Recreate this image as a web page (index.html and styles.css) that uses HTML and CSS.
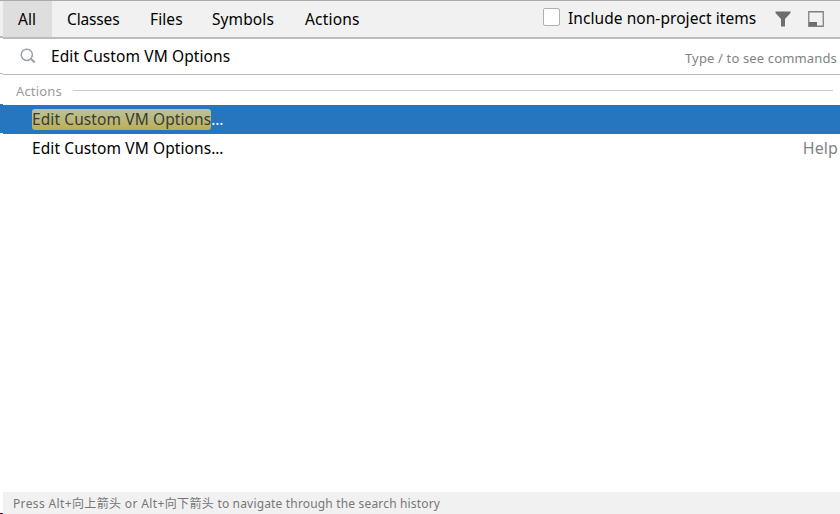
FILE: index.html
```html
<!DOCTYPE html>
<html lang="en">
<head>
<meta charset="utf-8">
<title>Search Everywhere</title>
<link rel="stylesheet" href="styles.css">
</head>
<body>
<div class="window">
  <div class="edge">
    <div class="edge-header"></div>
    <div class="edge-search"></div>
    <div class="edge-selected"></div>
    <div class="edge-corner"><i class="red"></i><i class="navy"></i><i class="blue"></i></div>
  </div>
  <main class="popup">
    <header class="header">
      <nav class="tabs">
        <span class="tab tab-all">All</span>
        <span class="tab tab-classes">Classes</span>
        <span class="tab tab-files">Files</span>
        <span class="tab tab-symbols">Symbols</span>
        <span class="tab tab-actions">Actions</span>
      </nav>
      <div class="tools">
        <span class="checkbox"></span>
        <span class="include">Include non-project items</span>
        <svg class="filter" width="16" height="16" viewBox="0 0 16 16"><path d="M0.5 .5H15.5V2L10 8V15.5H6V8L0.5 2Z" fill="#6e6e6e"/></svg>
        <svg class="dock" width="16" height="16" viewBox="0 0 16 16"><path d="M.75 .75H15.25V15.25H.75Z" fill="none" stroke="#808080" stroke-width="1.3"/><path d="M1 11H9V15H1Z" fill="#6e6e6e"/></svg>
      </div>
    </header>
    <div class="search">
      <svg class="magnifier" width="16" height="16" viewBox="0 0 16 16" fill="none" stroke="#9aa0a5"><circle cx="6.8" cy="6.8" r="5.6" stroke-width="1.5"/><path d="M10.8 10.8L14.7 14.5" stroke-width="2"/></svg>
      <span class="query">Edit Custom VM Options</span>
      <span class="hint">Type / to see commands</span>
    </div>
    <div class="group"><span class="group-title">Actions</span><span class="rule"></span></div>
    <div class="row selected"><span class="match">Edit Custom VM Options</span><span class="dots">...</span></div>
    <div class="row"><span class="label">Edit Custom VM Options</span><span class="dots">...</span><span class="help">Help</span></div>
    <footer class="footer"><span class="keys">Press Alt+向上箭头 or Alt+向下箭头</span><span class="tip"> to navigate through the search history</span></footer>
  </main>
</div>
</body>
</html>
```

FILE: styles.css
```css
* { box-sizing: border-box; }
body { margin: 0; background: #fff; color: #000; font: 15.5px/20px "Noto Sans", "Noto Sans CJK SC", sans-serif; letter-spacing: .1px; }
svg { display: block; flex: none; }
.window { display: flex; width: 840px; height: 514px; overflow: hidden; border-top: 1px solid #aaa; white-space: nowrap; }
.edge { width: 3px; flex: none; display: flex; flex-direction: column; }
.edge-header { height: 37px; background: #f0f0f0; border-bottom: 2px solid #bbb; }
.edge-search { height: 36px; border-bottom: 1px solid #bbb; }
.edge-selected { height: 29px; margin-top: 30px; background: #2675bf; }
.edge-corner { display: flex; margin-top: auto; height: 1px; }
.edge-corner i { width: 1px; }
.red { background: #d00; }
.navy { background: #003; }
.blue { background: #05b; }
.popup { flex: 1; min-width: 0; display: flex; flex-direction: column; }
.header { height: 38px; flex: none; display: flex; justify-content: space-between; background: #f1f1f1; border-bottom: 2px solid #bbb; }
.tabs { display: flex; }
.tab { padding: 8px 0 0 15px; }
.tab-all { width: 49px; background: #dedede; }
.tab-classes { width: 83px; letter-spacing: -.15px; }
.tab-files { width: 62px; }
.tab-symbols { width: 93px; }
.tab-actions { letter-spacing: .18px; }
.tools { display: flex; align-items: flex-start; }
.checkbox { width: 17px; height: 18px; margin: 7px 8px 0 0; border: 1px solid #b0b0b0; border-radius: 2px; background: #fff; }
.include { width: 207px; padding-top: 7px; letter-spacing: .06px; }
.filter { margin: 10px 17px 0 0; }
.dock { margin: 10px 16px 0 0; }
.search { height: 36px; flex: none; display: flex; border-bottom: 1px solid #bbb; }
.magnifier { margin: 9px 15px 0 17px; }
.query { padding-top: 7px; }
.hint { margin: 9px 3px 0 auto; font-size: 13px; letter-spacing: .15px; color: #828282; }
.group { height: 30px; flex: none; display: flex; padding: 6px 7px 0 13px; color: #999; font-size: 13px; letter-spacing: .15px; }
.group-title { width: 57px; }
.rule { flex: 1; height: 1px; margin-top: 9px; background: #ccc; }
.row { height: 29px; flex: none; display: flex; padding: 4px 2px 0 29px; }
.selected { background: #2675bf; color: #fff; }
.match { height: 21px; border-radius: 3px; background: linear-gradient(#b9c39c, #bbae56); color: #3a3a35; }
.dots { letter-spacing: -.2px; }
.help { margin-left: auto; font-size: 16px; color: #828282; }
.footer { height: 22px; margin-top: auto; padding: 2px 10px 0; background: #f1f1f1; color: #777; font-size: 12px; }
.keys { letter-spacing: .36px; }
.tip { letter-spacing: .17px; }
```
